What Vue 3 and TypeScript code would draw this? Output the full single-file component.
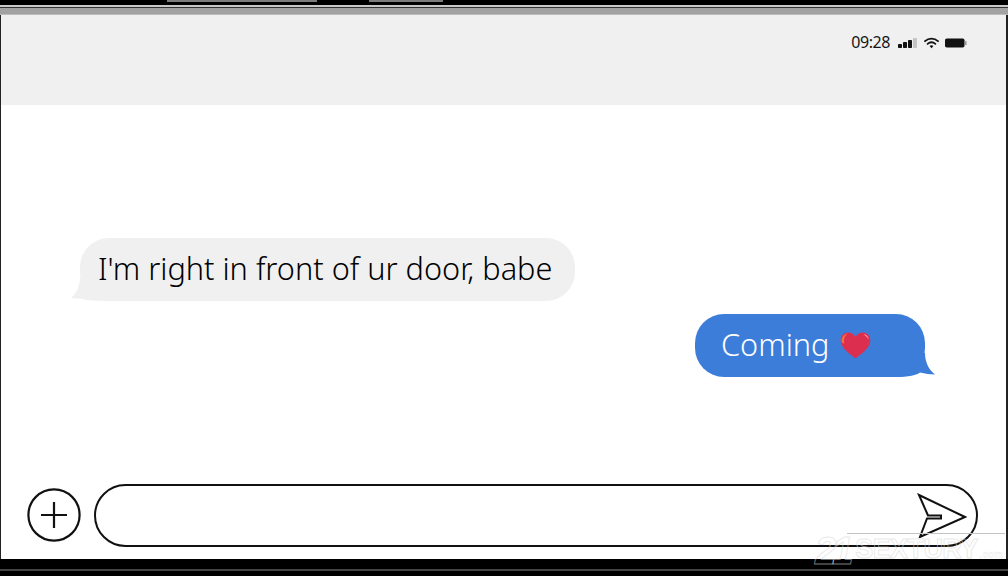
<script setup lang="ts">
const signalBars: { x: number; y: number; h: number; fill: string }[] = [
  { x: 0, y: 6, h: 4, fill: '#111' },
  { x: 5, y: 4, h: 6, fill: '#111' },
  { x: 10, y: 2, h: 8, fill: '#111' },
  { x: 15, y: 0, h: 10, fill: '#c4c4c4' },
]
</script>

<template>
  <div class="frame">
    <div class="bezel-top">
      <div class="buttons">
        <span class="btn btn-a"></span>
        <span class="btn btn-b"></span>
      </div>
      <div class="line-light"></div>
      <div class="line-dark"></div>
      <div class="line-grey"></div>
    </div>

    <div class="screen">
      <header class="status">
        <span class="time">09:28</span>
        <svg class="signal" width="19" height="10" viewBox="0 0 19 10">
          <rect v-for="b in signalBars" :key="b.x" :x="b.x" :y="b.y" width="4" :height="b.h" rx="0.8" :fill="b.fill" />
        </svg>
        <svg class="wifi" width="15" height="12" viewBox="0 0 15 12">
          <path d="M1 4.2C4.8.7 10.2.7 14 4.2" fill="none" stroke="#111" stroke-width="1.8" stroke-linecap="round" />
          <path d="M3.6 6.9c2.3-2 5.5-2 7.8 0" fill="none" stroke="#111" stroke-width="1.8" stroke-linecap="round" />
          <path d="M5.6 9c1.1-.9 2.7-.9 3.8 0L7.5 11.2z" fill="#111" />
        </svg>
        <svg class="battery" width="22" height="10" viewBox="0 0 22 10">
          <rect x="0" y="0.5" width="19.5" height="9" rx="1.8" fill="#111" />
          <rect x="20" y="3" width="1.6" height="4" rx="0.6" fill="#9a9a9a" />
        </svg>
      </header>

      <main class="thread">
        <div class="bubble incoming">
          <svg class="tail tail-in" width="40" height="24" viewBox="0 0 40 24">
            <path d="M9 0C9 8 6 16 0 21C7 21.500 12 22 16 23C22 23.800 30 24 40 24V0z" fill="#f0f0f0" />
          </svg>
          <span class="msg">I'm right in front of ur door, babe</span>
        </div>
        <div class="bubble outgoing">
          <svg class="tail tail-out" width="40" height="24" viewBox="0 0 40 24">
            <path d="M30 0C30 8 33 16 40 21.500C35 21.500 30 20.500 25 19.500C22 22 14 24 0 24V0z" fill="#3c7dd9" />
          </svg>
          <span class="msg">Coming</span>
          <svg class="heart" width="31" height="27" viewBox="0 0 33 29">
            <path d="M16.500 28.500C12 24.500 1 18 .6 9.600.3 4 4.200.6 8.600.6c3.600 0 6.400 1.900 7.900 4.800C18 2.500 20.800.6 24.400.6c4.400 0 8.300 3.400 8 9C32 18 21 24.500 16.500 28.500z" fill="#dc2f4f" />
            <path d="M1.500 11C1 6 4 2 8.500 1.500 5 3.500 3.500 7 4.500 12.500z" fill="#ee7040" />
            <path d="M25 2.500c3 0 5.500 2.300 5.500 5.500-1-2-2.800-3.800-5.500-5.500z" fill="#f4a0a8" />
          </svg>
        </div>
      </main>

      <footer class="composer">
        <button class="add" type="button" aria-label="Add">
          <svg width="54" height="54" viewBox="0 0 54 54">
            <circle cx="27" cy="27" r="25.600" fill="none" stroke="#111" stroke-width="2.200" />
            <path d="M14 27H40M27 14V40" fill="none" stroke="#111" stroke-width="2.200" />
          </svg>
        </button>
        <div class="input">
          <svg class="send" width="50" height="45" viewBox="0 0 50 45">
            <path d="M2 2L48 24 3 44 10 25.500H24V22.500H11z" fill="none" stroke="#111" stroke-width="2" stroke-linejoin="miter" />
          </svg>
        </div>
      </footer>
    </div>

    <div class="bezel-bottom">
      <div class="bottom-line"></div>
    </div>

    <div class="watermark">
      <span class="wm-big">21</span><span class="wm-mid">SEXTURY</span><span class="wm-small">.com</span>
    </div>
  </div>
</template>

<style>
html, body { margin: 0; background: #000; }
</style>

<style scoped>
.frame {
  position: relative;
  width: 1008px;
  height: 576px;
  display: flex;
  flex-direction: column;
  background: #000;
  overflow: hidden;
  font-family: "Noto Sans", "Open Sans", sans-serif;
}
.bezel-top { flex: none; height: 15px; display: flex; flex-direction: column; }
.buttons { height: 5px; position: relative; background: #000; }
.btn { position: absolute; top: 0; height: 2px; background: #7c7c7c; }
.btn-a { left: 167px; width: 150px; }
.btn-b { left: 369px; width: 74px; }
.line-light { height: 2px; background: #c8c8c8; }
.line-dark { height: 1px; background: #333; }
.line-grey { flex: 1; background: #a2a2a2; border-bottom: 1px solid #bdbdbd; }

.screen {
  flex: 1;
  position: relative;
  display: flex;
  flex-direction: column;
  background: #fff;
  border-left: 1px solid #222;
  border-right: 2px solid #222;
  min-height: 0;
}
.status {
  flex: none;
  height: 90px;
  box-sizing: border-box;
  background: #f0f0f0;
  display: flex;
  justify-content: flex-end;
  align-items: flex-start;
  padding: 18px 39px 0 0;
}
.time {
  font-size: 16px;
  line-height: 19px;
  letter-spacing: -0.45px;
  color: #151515;
  margin-right: 8px;
}
.signal { margin-top: 5px; margin-right: 7px; }
.wifi { margin-top: 4px; margin-right: 6px; }
.battery { margin-top: 5px; }

.thread {
  flex: 1;
  display: flex;
  flex-direction: column;
  gap: 13px;
  padding: 133px 0 0 79px;
  min-height: 0;
}
.bubble {
  position: relative;
  box-sizing: border-box;
  height: 63px;
  border-radius: 29px;
  display: flex;
  align-items: center;
  font-size: 30.700px;
  font-weight: 300;
  white-space: nowrap;
}
.msg { position: relative; z-index: 1; margin-bottom: 4px; }
.incoming {
  width: 495px;
  padding-left: 18px;
  background: #f0f0f0;
  color: #000;
}
.outgoing {
  align-self: flex-end;
  width: 230px;
  margin-right: 81px;
  padding-left: 26px;
  background: #3c7dd9;
  color: #fff;
}
.tail { position: absolute; bottom: 0; }
.tail-in { left: -9px; }
.tail-out { right: -10px; }
.heart { position: relative; z-index: 1; margin-left: 11px; }

.composer {
  flex: none;
  display: flex;
  align-items: center;
  gap: 13px;
  padding: 0 28px 12px 26px;
}
.add { flex: none; width: 54px; height: 54px; padding: 0; border: 0; background: none; margin-bottom: 2px; }
.add svg { display: block; }
.input {
  flex: 1;
  height: 63px;
  box-sizing: border-box;
  border: 2.500px solid #111;
  border-radius: 32px;
  display: flex;
  align-items: center;
  justify-content: flex-end;
  padding-right: 9px;
}
.watermark {
  position: absolute;
  left: 815px;
  right: 3px;
  bottom: 6px;
  height: 37px;
  display: flex;
  align-items: flex-end;
  color: transparent;
  -webkit-text-stroke: 1px rgba(215, 215, 215, 0.55);
  font-family: "Liberation Sans", sans-serif;
  font-weight: 700;
  white-space: nowrap;
  line-height: 1;
}
.watermark::after {
  content: "";
  position: absolute;
  left: 32px;
  right: 0;
  top: 0;
  border-top: 1px solid #c4c4c4;
}
.wm-big { font-size: 38px; font-style: italic; letter-spacing: -4px; margin-right: 6px; }
.wm-mid { font-size: 27px; margin-bottom: 7px; letter-spacing: -0.6px; }
.wm-small { font-size: 10px; margin-bottom: 10px; margin-left: 2px; -webkit-text-stroke: 0.4px rgba(215, 215, 215, 0.6); }

.bezel-bottom { flex: none; height: 17px; background: #000; padding-top: 10px; box-sizing: border-box; }
.bottom-line { height: 2px; background: #444; }
</style>
